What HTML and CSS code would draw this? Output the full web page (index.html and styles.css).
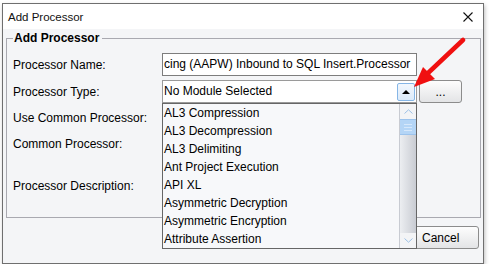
FILE: index.html
```html
<!DOCTYPE html>
<html lang="en">
<head>
  <meta charset="UTF-8" />
  <title>Add Processor</title>
  <link rel="stylesheet" href="styles.css">
</head>
<body>
  <div class="window">
    <div class="titlebar">
      <span class="title">Add Processor</span>
      <svg class="close" width="10" height="10" viewBox="0 0 10 10">
        <path d="M0.5 0.5 L9.5 9.5 M9.5 0.5 L0.5 9.5" stroke="#111" stroke-width="1.1" fill="none"/>
      </svg>
    </div>

    <div class="content">
      <fieldset class="group">
        <legend>Add Processor</legend>
        <div class="form">
          <label class="lbl">Processor Name:</label>
          <div class="textfield">cing (AAPW) Inbound to SQL Insert.Processor</div>
          <span></span>

          <label class="lbl">Processor Type:</label>
          <div class="combo">
            <span class="combo-text">No Module Selected</span>
            <span class="combo-btn"><span class="tri"></span></span>

            <div class="popup">
              <ul class="items">
                <li>AL3 Compression</li>
                <li>AL3 Decompression</li>
                <li>AL3 Delimiting</li>
                <li>Ant Project Execution</li>
                <li>API XL</li>
                <li>Asymmetric Decryption</li>
                <li>Asymmetric Encryption</li>
                <li>Attribute Assertion</li>
              </ul>
              <div class="scrollbar">
                <div class="sb-arrow">
                  <svg width="9" height="5" viewBox="0 0 9 5"><path d="M0.5 4.5 L4.5 0.8 L8.5 4.5" stroke="#9cc0e6" fill="none"/></svg>
                </div>
                <div class="sb-thumb"><i></i><i></i><i></i></div>
                <div class="sb-track"></div>
                <div class="sb-arrow">
                  <svg width="9" height="5" viewBox="0 0 9 5"><path d="M0.5 0.5 L4.5 4.2 L8.5 0.5" stroke="#9cc0e6" fill="none"/></svg>
                </div>
              </div>
            </div>
          </div>
          <button class="btn dots">...</button>

          <label class="lbl">Use Common Processor:</label>
          <span></span>
          <span></span>

          <label class="lbl">Common Processor:</label>
          <span></span>
          <span></span>

          <label class="lbl">Processor Description:</label>
          <span></span>
          <span></span>
        </div>
      </fieldset>

      <div class="actions">
        <button class="btn ok">OK</button>
        <button class="btn cancel">Cancel</button>
      </div>
    </div>

    <svg class="pointer" width="60" height="60" viewBox="0 0 60 60">
      <line x1="52" y1="3" x2="16" y2="37" stroke="#f01010" stroke-width="4.5" stroke-linecap="round"/>
      <polygon points="3,50 12,30 24,42" fill="#f01010"/>
    </svg>
  </div>
</body>
</html>
```

FILE: styles.css
```css
body {
  margin: 0;
  background: #fff;
  font-family: "Liberation Sans", Arial, sans-serif;
  font-size: 12px;
  color: #000;
}
.window {
  position: relative;
  margin: 3px 0 0 2px;
  width: 482px;
  height: 261px;
  box-sizing: border-box;
  border: 1px solid #6f6f6f;
  display: flex;
  flex-direction: column;
  box-shadow: 1px 2px 4px rgba(0, 0, 0, 0.25);
}
.titlebar {
  height: 25px;
  flex: none;
  background: #fff;
  display: flex;
  align-items: center;
  justify-content: space-between;
  padding: 0 10px 0 5px;
}
.title {
  font-size: 11.5px;
  color: #111;
}
.content {
  flex: 1;
  background: #f4f5f7;
  padding: 2px 2px 0 3px;
}
.group {
  margin: 0;
  padding: 8px 0 4px 6px;
  border: 1px solid #a9a9b0;
  min-width: 0;
}
.group legend {
  font-weight: bold;
  font-size: 12px;
  line-height: 14px;
  padding: 0 3px 0 1px;
  margin-left: 0;
}
.form {
  display: grid;
  grid-template-columns: 147px 255px 43px;
  grid-template-rows: 23px 23px 21px 23px 54px;
  column-gap: 2px;
  row-gap: 4px;
  align-items: center;
}
.lbl {
  line-height: 14px;
}
.textfield {
  height: 23px;
  box-sizing: border-box;
  border: 1px solid #7d7d7d;
  background: #fff;
  padding: 0 2px 0 1px;
  line-height: 21px;
  white-space: nowrap;
  overflow: hidden;
}
.combo {
  position: relative;
  height: 23px;
  box-sizing: border-box;
  border: 1px solid #9a9a9a;
  background: #fff;
  display: flex;
  align-items: center;
  padding: 0 1px 0 1px;
}
.combo-text {
  flex: 1;
  line-height: 21px;
}
.combo-btn {
  width: 18px;
  height: 18px;
  box-sizing: border-box;
  border: 1px solid #86b6e6;
  border-radius: 2px;
  background: linear-gradient(#f2f7fd, #dcebfa);
  display: flex;
  align-items: center;
  justify-content: center;
}
.tri {
  width: 0;
  height: 0;
  border-left: 4px solid transparent;
  border-right: 4px solid transparent;
  border-bottom: 4px solid #000;
}
.popup {
  position: absolute;
  left: -1px;
  top: 22px;
  width: 255px;
  height: 146px;
  box-sizing: border-box;
  border: 1px solid #666;
  background: #f7f8fa;
  display: flex;
  z-index: 2;
}
.items {
  list-style: none;
  margin: 0;
  padding: 0;
  flex: 1;
}
.items li {
  height: 18px;
  line-height: 18px;
  padding-left: 1px;
  white-space: nowrap;
}
.scrollbar {
  width: 16px;
  display: flex;
  flex-direction: column;
  border-left: 1px solid #c8cbd2;
}
.sb-arrow {
  height: 15px;
  flex: none;
  background: #f3f4f6;
  display: flex;
  align-items: center;
  justify-content: center;
}
.sb-thumb {
  height: 16px;
  flex: none;
  background: #b4d5f6;
  border-top: 1px solid #9cc3ec;
  border-bottom: 1px solid #9cc3ec;
  box-sizing: border-box;
  display: flex;
  flex-direction: column;
  align-items: center;
  justify-content: center;
  gap: 2px;
}
.sb-thumb i {
  display: block;
  width: 8px;
  height: 1px;
  background: #d6e8fb;
}
.sb-track {
  flex: 1;
  background: linear-gradient(to right, #eceef1, #c9ccd3);
}
.btn {
  font-family: "Liberation Sans", Arial, sans-serif;
  font-size: 12px;
  color: #000;
  border: 1px solid #8c8c8c;
  border-radius: 3px;
  background: linear-gradient(#fdfdfd, #e3e4e6);
  padding: 0;
}
.dots {
  height: 23px;
  line-height: 18px;
}
.actions {
  display: flex;
  justify-content: flex-end;
  gap: 5px;
  margin-top: 8px;
  padding-right: 2px;
}
.ok {
  width: 78px;
  height: 23px;
}
.cancel {
  width: 95px;
  height: 23px;
  text-align: left;
  padding-left: 37px;
}
.pointer {
  position: absolute;
  left: 408px;
  top: 33px;
  z-index: 3;
}
```
